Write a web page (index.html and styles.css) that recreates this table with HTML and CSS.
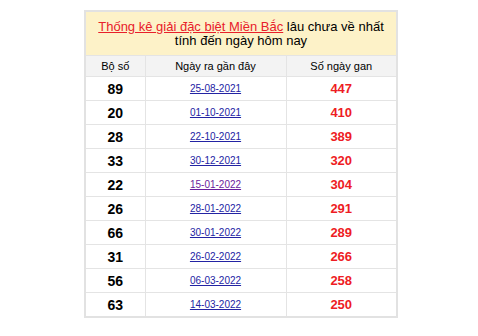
FILE: index.html
```html
<!DOCTYPE html>
<html lang="vi">
<head>
<meta charset="utf-8">
<link rel="stylesheet" href="styles.css">
</head>
<body>
<div class="wrap">
<table class="gan">
<colgroup><col class="c1"><col class="c2"><col class="c3"></colgroup>
<thead>
<tr><th class="title" colspan="3"><a href="#" class="title-link">Thống kê giải đặc biệt Miền Bắc</a> <span>lâu chưa về nhất</span><br><span>tính đến ngày hôm nay</span></th></tr>
<tr class="head"><th>Bộ số</th><th>Ngày ra gần đây</th><th>Số ngày gan</th></tr>
</thead>
<tbody>
<tr><td class="num">89</td><td class="date"><a href="#">25-08-2021</a></td><td class="gan-days">447</td></tr>
<tr><td class="num">20</td><td class="date"><a href="#">01-10-2021</a></td><td class="gan-days">410</td></tr>
<tr><td class="num">28</td><td class="date"><a href="#">22-10-2021</a></td><td class="gan-days">389</td></tr>
<tr><td class="num">33</td><td class="date"><a href="#">30-12-2021</a></td><td class="gan-days">320</td></tr>
<tr><td class="num">22</td><td class="date"><a href="#" class="visited">15-01-2022</a></td><td class="gan-days">304</td></tr>
<tr><td class="num">26</td><td class="date"><a href="#">28-01-2022</a></td><td class="gan-days">291</td></tr>
<tr><td class="num">66</td><td class="date"><a href="#">30-01-2022</a></td><td class="gan-days">289</td></tr>
<tr><td class="num">31</td><td class="date"><a href="#">26-02-2022</a></td><td class="gan-days">266</td></tr>
<tr><td class="num">56</td><td class="date"><a href="#">06-03-2022</a></td><td class="gan-days">258</td></tr>
<tr><td class="num">63</td><td class="date"><a href="#">14-03-2022</a></td><td class="gan-days">250</td></tr>
</tbody>
</table>
</div>
</body>
</html>
```
FILE: styles.css
```css
html, body {
  margin: 0;
  padding: 0;
  background: #fff;
}
body {
  font-family: "Liberation Sans", Arial, sans-serif;
  color: #000;
}
.wrap {
  margin: 10px 0 0 84px;
  width: 310px;
  border: 2px solid #e2e2e2;
}
.gan {
  width: 100%;
  border-collapse: collapse;
  table-layout: fixed;
}
.gan th, .gan td {
  border: 1px solid #e4e4e4;
  padding: 0;
  text-align: center;
}
.gan tr:first-child th { border-top: 0; }
.gan th:first-child, .gan td:first-child { border-left: 0; }
.gan th:last-child, .gan td:last-child { border-right: 0; }
.gan tbody tr:last-child td { border-bottom: 0; }
.title {
  background: #fdf2c8;
  font-weight: normal;
  font-size: 13px;
  line-height: 14px;
  height: 43px;
  padding: 0 12px;
}
.title-link {
  color: #e8202a;
  text-decoration: underline;
}
.head th {
  background: #f3f3f3;
  font-weight: normal;
  font-size: 11px;
  height: 20px;
}
.c1 { width: 59px; }
.c2 { width: 141px; }
.c3 { width: 110px; }
.gan td {
  height: 23px;
}
.num {
  font-weight: bold;
  font-size: 14px;
}
.date {
  font-size: 10px;
}
.date a {
  color: #2323a3;
  text-decoration: underline;
}
.date a.visited {
  color: #6b1c9c;
}
.gan-days {
  color: #ee1c24;
  font-weight: bold;
  font-size: 13px;
}
```
